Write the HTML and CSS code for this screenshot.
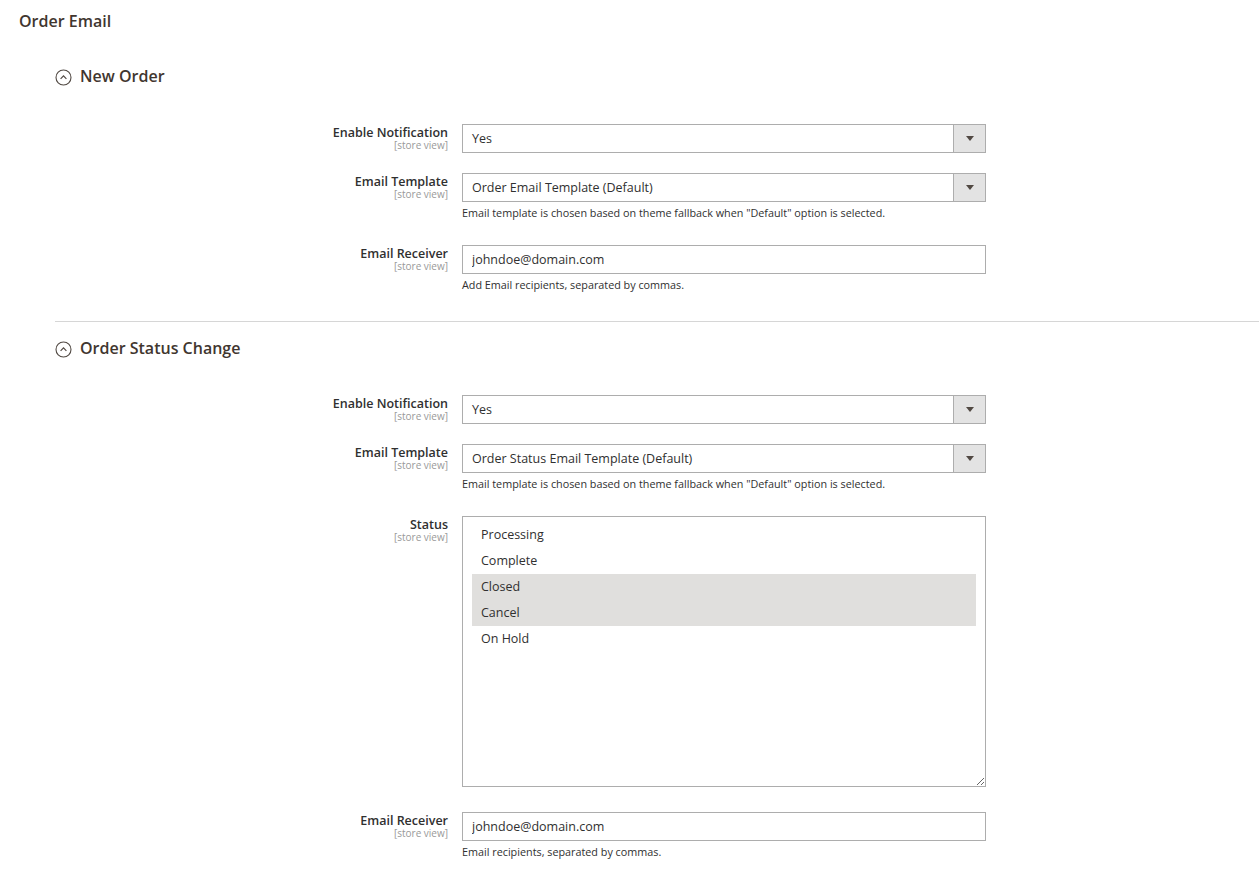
FILE: index.html
```html
<!DOCTYPE html>
<html lang="en">
<head>
    <meta charset="UTF-8">
    <meta name="viewport" content="width=device-width, initial-scale=1.0">
    <title>Order Email</title>
    <link rel="stylesheet" href="styles.css">
</head>
<body>
    <div class="page">
        <h1 class="page-title">Order Email</h1>

        <!-- New Order group -->
        <div class="group group-first">
            <div class="group-head">
                <svg class="toggle-icon" width="17" height="17" viewBox="0 0 17 17">
                    <circle cx="8.5" cy="8.5" r="7.5" fill="none" stroke="#514943" stroke-width="1.1"/>
                    <path d="M5.6 9.8 L8.5 6.9 L11.4 9.8" fill="none" stroke="#514943" stroke-width="1.2"/>
                </svg>
                <span>New Order</span>
            </div>

            <div class="field">
                <div class="label"><b>Enable Notification</b><span>[store view]</span></div>
                <div class="control">
                    <div class="select"><span>Yes</span><i class="arrow"></i></div>
                </div>
            </div>

            <div class="field">
                <div class="label"><b>Email Template</b><span>[store view]</span></div>
                <div class="control">
                    <div class="select"><span>Order Email Template (Default)</span><i class="arrow"></i></div>
                    <p class="note">Email template is chosen based on theme fallback when "Default" option is selected.</p>
                </div>
            </div>

            <div class="field">
                <div class="label"><b>Email Receiver</b><span>[store view]</span></div>
                <div class="control">
                    <input class="text-input" type="text" value="johndoe@domain.com">
                    <p class="note">Add Email recipients, separated by commas.</p>
                </div>
            </div>
        </div>

        <!-- Order Status Change group -->
        <div class="group group-border">
            <div class="group-head">
                <svg class="toggle-icon" width="17" height="17" viewBox="0 0 17 17">
                    <circle cx="8.5" cy="8.5" r="7.5" fill="none" stroke="#514943" stroke-width="1.1"/>
                    <path d="M5.6 9.8 L8.5 6.9 L11.4 9.8" fill="none" stroke="#514943" stroke-width="1.2"/>
                </svg>
                <span>Order Status Change</span>
            </div>

            <div class="field">
                <div class="label"><b>Enable Notification</b><span>[store view]</span></div>
                <div class="control">
                    <div class="select"><span>Yes</span><i class="arrow"></i></div>
                </div>
            </div>

            <div class="field">
                <div class="label"><b>Email Template</b><span>[store view]</span></div>
                <div class="control">
                    <div class="select"><span>Order Status Email Template (Default)</span><i class="arrow"></i></div>
                    <p class="note">Email template is chosen based on theme fallback when "Default" option is selected.</p>
                </div>
            </div>

            <div class="field field-tall">
                <div class="label"><b>Status</b><span>[store view]</span></div>
                <div class="control">
                    <div class="multiselect">
                        <div class="option">Processing</div>
                        <div class="option">Complete</div>
                        <div class="option selected">Closed</div>
                        <div class="option selected">Cancel</div>
                        <div class="option">On Hold</div>
                    </div>
                </div>
            </div>

            <div class="field">
                <div class="label"><b>Email Receiver</b><span>[store view]</span></div>
                <div class="control">
                    <input class="text-input" type="text" value="johndoe@domain.com">
                    <p class="note">Email recipients, separated by commas.</p>
                </div>
            </div>
        </div>
    </div>
</body>
</html>
```

FILE: styles.css
```css
/* Base */
body {
    margin: 0;
    padding: 0;
    background: #fff;
    font-family: "Open Sans", "Liberation Sans", sans-serif;
    color: #333;
}

.page {
    padding: 10px 0 0 19px;
}

.page-title {
    margin: 0;
    font-size: 16px;
    font-weight: 600;
    line-height: 22px;
    color: #41362f;
}

/* Collapsible groups */
.group {
    margin-left: 36px;
    padding-bottom: 4px;
}

.group-border {
    border-top: 1px solid #d6d6d6;
    padding-top: 15px;
}

.group-head {
    display: flex;
    align-items: center;
    gap: 8px;
    font-size: 16px;
    font-weight: 600;
    color: #41362f;
    height: 22px;
    margin: 0 0 36px;
}

.group-first .group-head {
    margin: 33px 0 37px;
}

.toggle-icon {
    flex: none;
    margin-top: 2px;
}

/* Field rows */
.field {
    display: grid;
    grid-template-columns: 393px 524px;
    column-gap: 14px;
    margin-bottom: 20px;
}

.field-tall {
    margin-bottom: 25px;
}

.label {
    display: flex;
    flex-direction: column;
    align-items: flex-end;
    text-align: right;
    padding-top: 2px;
}

.label b {
    font-size: 12.5px;
    font-weight: 600;
    line-height: 14px;
    color: #303030;
}

.label span {
    font-size: 10px;
    line-height: 11px;
    color: #999;
}

.control {
    min-width: 0;
}

/* Select boxes */
.select {
    display: flex;
    align-items: center;
    height: 29px;
    border: 1px solid #adadad;
    background: #fff;
    font-size: 12.5px;
    color: #303030;
    box-sizing: border-box;
}

.select span {
    flex: 1;
    padding-left: 9px;
}

.arrow {
    width: 31px;
    height: 27px;
    border-left: 1px solid #adadad;
    background: #e3e3e3;
    position: relative;
}

.arrow::after {
    content: "";
    position: absolute;
    left: 12px;
    top: 11px;
    border-left: 4px solid transparent;
    border-right: 4px solid transparent;
    border-top: 5px solid #514943;
}

.text-input {
    display: block;
    width: 100%;
    height: 29px;
    box-sizing: border-box;
    border: 1px solid #adadad;
    padding: 0 9px;
    font-family: inherit;
    font-size: 12.5px;
    color: #303030;
    outline: none;
}

.note {
    margin: 2px 0 3px;
    font-size: 10.8px;
    line-height: 18px;
    color: #303030;
}

/* Multiple select */
.multiselect {
    height: 271px;
    box-sizing: border-box;
    border: 1px solid #adadad;
    padding: 5px 9px;
    overflow: auto;
    resize: vertical;
}

.option {
    height: 26px;
    line-height: 26px;
    padding-left: 9px;
    font-size: 12.5px;
    color: #303030;
}

.option.selected {
    background: #e0dfdd;
}
```
